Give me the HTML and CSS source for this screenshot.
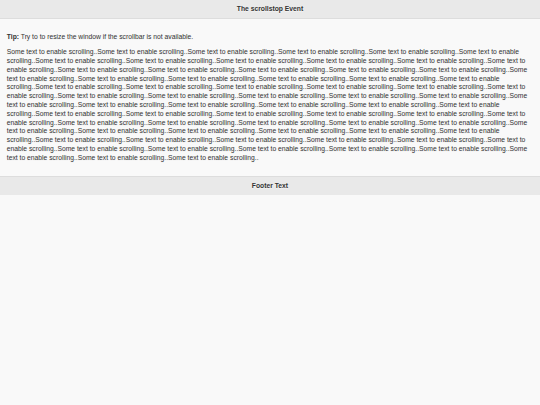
FILE: index.html
```html
<!DOCTYPE html>
<html>
<head>
<meta charset="utf-8">
<link rel="stylesheet" href="styles.css">
</head>
<body>
<div class="page">
  <div class="header"><h1 class="title">The scrollstop Event</h1></div>
  <div class="content">
    <p><b>Tip:</b> Try to to resize the window if the scrollbar is not available.</p>
    <p>Some text to enable scrolling..Some text to enable scrolling..Some text to enable scrolling..Some text to enable scrolling..Some text to enable scrolling..Some text to enable scrolling..Some text to enable scrolling..Some text to enable scrolling..Some text to enable scrolling..Some text to enable scrolling..Some text to enable scrolling..Some text to enable scrolling..Some text to enable scrolling..Some text to enable scrolling..Some text to enable scrolling..Some text to enable scrolling..Some text to enable scrolling..Some text to enable scrolling..Some text to enable scrolling..Some text to enable scrolling..Some text to enable scrolling..Some text to enable scrolling..Some text to enable scrolling..Some text to enable scrolling..Some text to enable scrolling..Some text to enable scrolling..Some text to enable scrolling..Some text to enable scrolling..Some text to enable scrolling..Some text to enable scrolling..Some text to enable scrolling..Some text to enable scrolling..Some text to enable scrolling..Some text to enable scrolling..Some text to enable scrolling..Some text to enable scrolling..Some text to enable scrolling..Some text to enable scrolling..Some text to enable scrolling..Some text to enable scrolling..Some text to enable scrolling..Some text to enable scrolling..Some text to enable scrolling..Some text to enable scrolling..Some text to enable scrolling..Some text to enable scrolling..Some text to enable scrolling..Some text to enable scrolling..Some text to enable scrolling..Some text to enable scrolling..Some text to enable scrolling..Some text to enable scrolling..Some text to enable scrolling..Some text to enable scrolling..Some text to enable scrolling..Some text to enable scrolling..Some text to enable scrolling..Some text to enable scrolling..Some text to enable scrolling..Some text to enable scrolling..Some text to enable scrolling..Some text to enable scrolling..Some text to enable scrolling..Some text to enable scrolling..Some text to enable scrolling..Some text to enable scrolling..Some text to enable scrolling..Some text to enable scrolling..Some text to enable scrolling..Some text to enable scrolling..Some text to enable scrolling..</p>
  </div>
  <div class="footer"><h1 class="title">Footer Text</h1></div>
</div>
</body>
</html>
```
FILE: styles.css
```css
html, body {
  margin: 0;
  padding: 0;
  background: #f9f9f9;
}
body {
  font-family: "Liberation Sans", Arial, sans-serif;
  font-size: 6.76px;
  line-height: 1.3;
  color: #333;
  text-shadow: 0 1px 0 #f3f3f3;
}
.page {
  min-height: 405px;
  background: #f9f9f9;
}
.header, .footer {
  background: #e9e9e9;
  border-color: #ddd;
  border-style: solid;
  border-width: 0;
}
.header { border-bottom-width: 1px; }
.footer { border-top-width: 1px; }
.title {
  font-size: 1em;
  font-weight: bold;
  margin: 0 30%;
  padding: 0.7em 0;
  text-align: center;
  white-space: nowrap;
  overflow: hidden;
  min-height: 1.1em;
}
.content {
  padding: 1em;
}
.content p {
  margin: 1em 0;
}
```
